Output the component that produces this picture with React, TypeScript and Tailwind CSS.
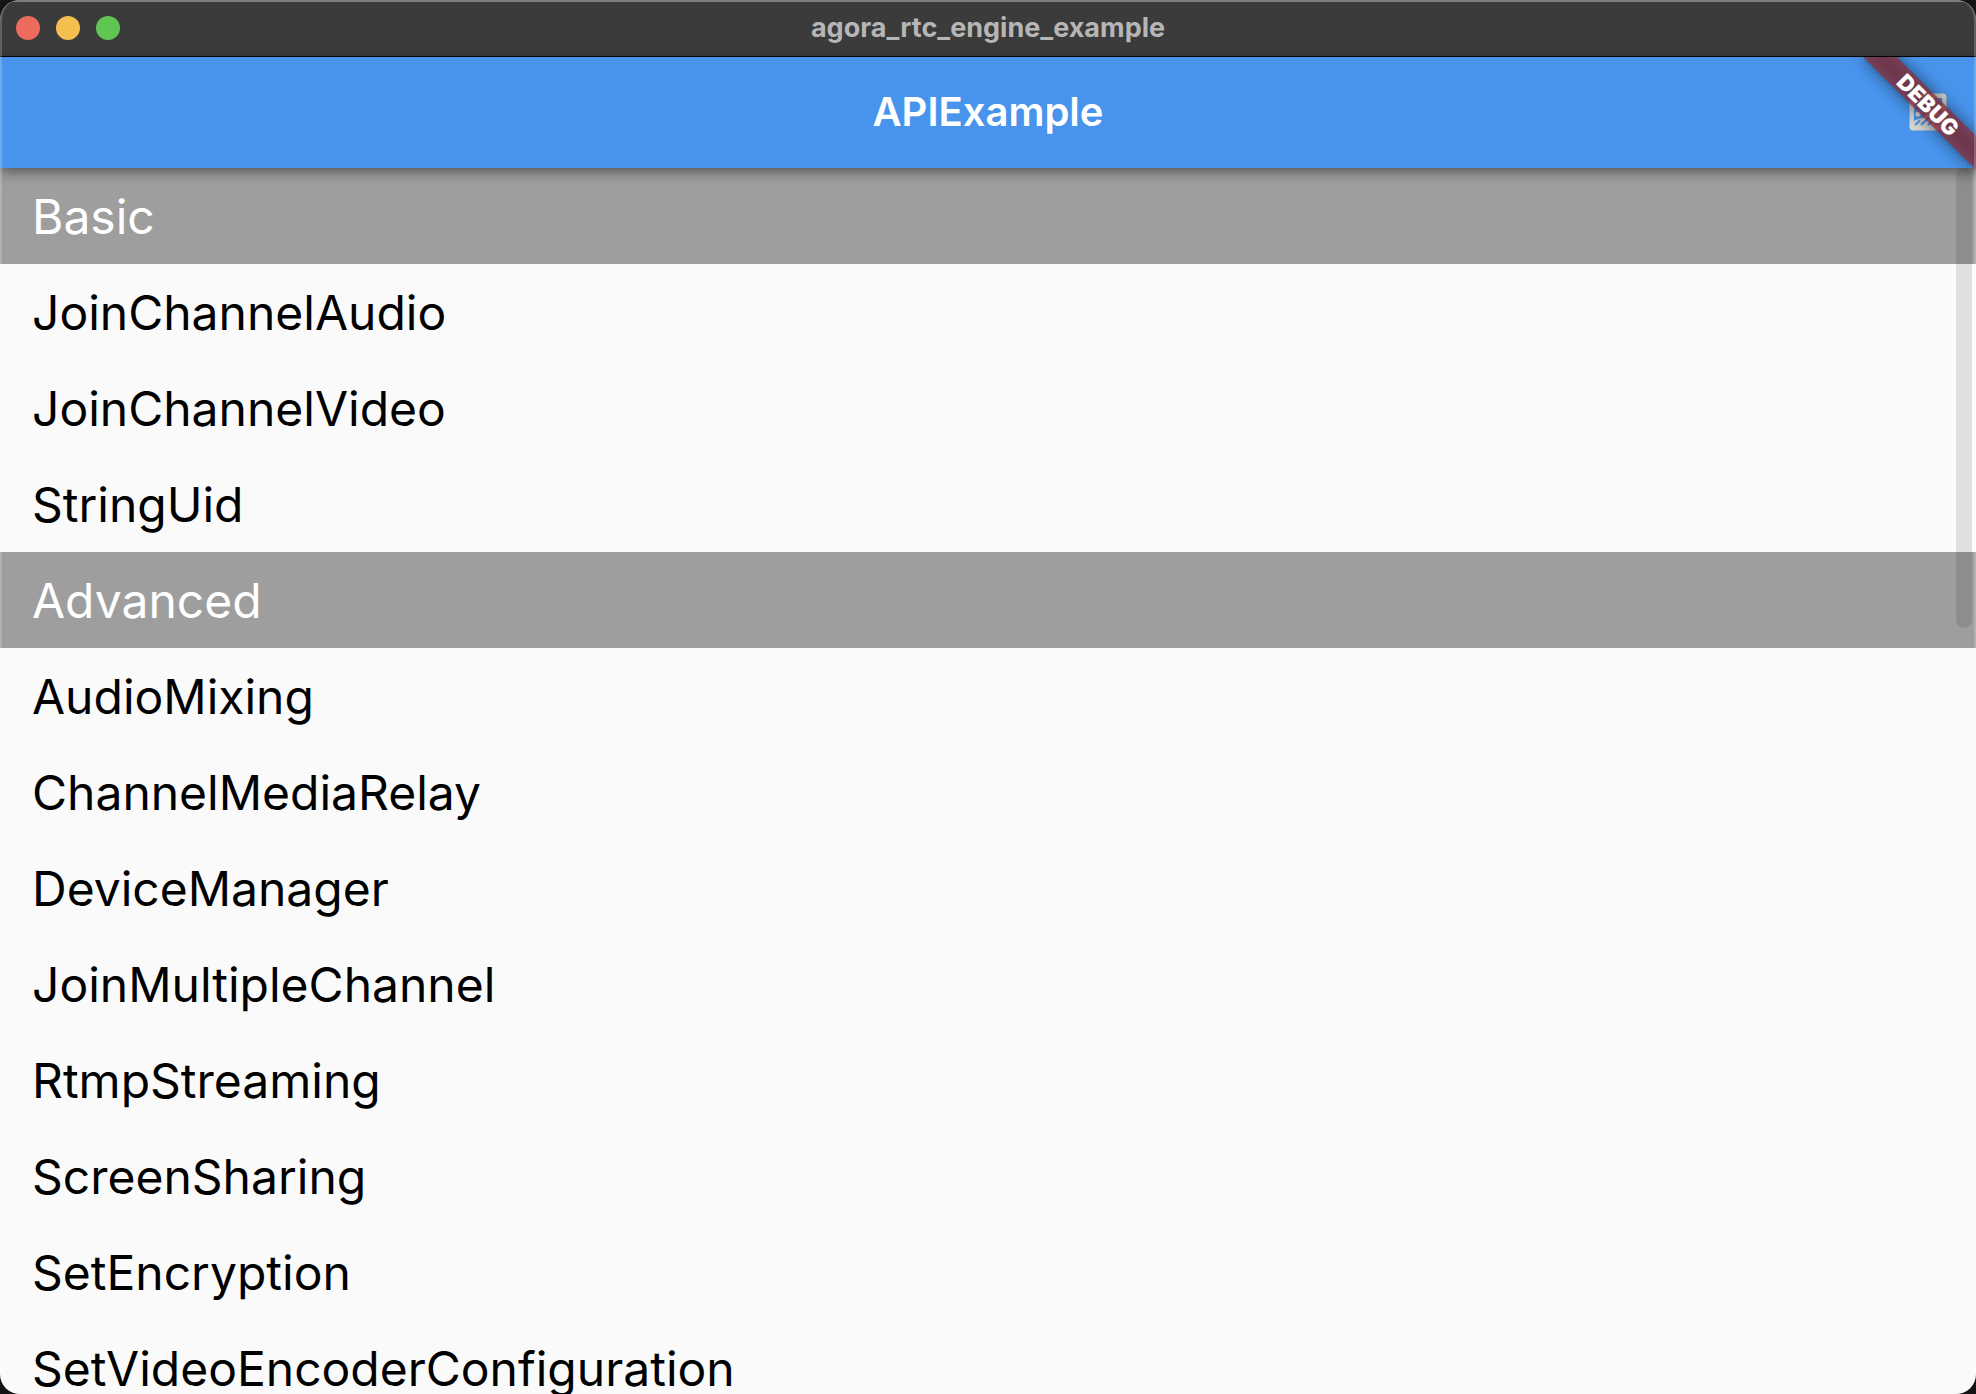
import { useState } from 'react'

interface Section {
  title: string
  items: string[]
}

const SECTIONS: Section[] = [
  { title: 'Basic', items: ['JoinChannelAudio', 'JoinChannelVideo', 'StringUid'] },
  {
    title: 'Advanced',
    items: [
      'AudioMixing', 'ChannelMediaRelay', 'DeviceManager', 'JoinMultipleChannel',
      'RtmpStreaming', 'ScreenSharing', 'SetEncryption', 'SetVideoEncoderConfiguration',
    ],
  },
]

function TitleBar({ title }: { title: string }) {
  return (
    <div className="grid h-[57px] shrink-0 grid-cols-[1fr_auto_1fr] items-center border-t-2 border-b border-t-[#7d7d7d] border-b-black bg-[#3b3b3b] px-4 pb-[2px]">
      <div className="flex gap-4">
        <button aria-label="Close" className="size-6 rounded-full bg-[#ed6a5e]" />
        <button aria-label="Minimize" className="size-6 rounded-full bg-[#f5bf4f]" />
        <button aria-label="Zoom" className="size-6 rounded-full bg-[#61c554]" />
      </div>
      <span className="text-[27px] leading-8 font-bold text-[#b6b6b6]">{title}</span>
    </div>
  )
}

function AboutIcon() {
  return (
    <svg viewBox="0 0 38 38" className="size-[38px]" fill="none">
      <defs>
        <linearGradient id="frame" x1="0" y1="0" x2="1" y2="1">
          <stop offset="0" stopColor="#c4c8cc" />
          <stop offset="0.5" stopColor="#d8d8d4" />
          <stop offset="1" stopColor="#c4c8cc" />
        </linearGradient>
      </defs>
      <rect x="0.5" y="0.5" width="37" height="37" rx="4" fill="url(#frame)" />
      <path d="M5 5H33V33H5Z" fill="#4894ed" />
      <circle cx="9" cy="21" r="2.6" fill="#dcdcdc" />
      <path d="M5 28L9 26L14 25L24 15L33 22V33H5Z" fill="#d4d4d2" />
      <path d="M6 32L11 27.5M12 32L20 24.5M19 32L28 23.5M26 32L33 25.5" stroke="#4894ed" strokeWidth="2" />
    </svg>
  )
}

function DebugBanner() {
  return (
    <div className="pointer-events-none absolute top-0 right-0 size-32 overflow-hidden">
      <div className="absolute top-9 -right-8 h-6 w-40 rotate-45 bg-black/50 blur-[8px]" />
      <div className="absolute top-9 -right-8 flex h-6 w-40 rotate-45 items-center justify-center bg-[#8e2c34]/70 text-[22px] leading-6 font-black text-white">
        DEBUG
      </div>
    </div>
  )
}

export default function App() {
  const [, setSelected] = useState<string | null>(null)

  return (
    <div className="h-screen bg-[#141414] font-['Inter','Liberation_Sans',sans-serif]">
      <div className="relative flex h-full flex-col overflow-hidden rounded-[20px] bg-[#fafafa]">
        <TitleBar title="agora_rtc_engine_example" />
        <div className="relative flex min-h-0 flex-1 flex-col">
          <header className="relative z-10 grid h-[111px] shrink-0 grid-cols-[1fr_auto_1fr] items-center bg-[#4894ed] px-[29px] pb-[2px] shadow-[0_4px_12px_rgba(0,0,0,0.45)]">
            <h1 className="col-start-2 text-[40px] leading-12 font-semibold text-white">APIExample</h1>
            <button aria-label="About" className="justify-self-end">
              <AboutIcon />
            </button>
          </header>
          <main className="relative min-h-0 flex-1 overflow-hidden">
            {SECTIONS.map((section) => (
              <section key={section.title}>
                <h2 className="bg-[#9e9e9e] px-8 pt-[21px] pb-[19px] text-5xl leading-14 text-white">
                  {section.title}
                </h2>
                <ul>
                  {section.items.map((item) => (
                    <li key={item}>
                      <button
                        onClick={() => setSelected(item)}
                        className="block w-full px-8 pt-[21px] pb-[19px] text-left text-5xl leading-14 text-black"
                      >
                        {item}
                      </button>
                    </li>
                  ))}
                </ul>
              </section>
            ))}
            {/* Scroll thumb */}
            <div className="absolute top-0 right-1 h-[460px] w-4 rounded-full bg-black/10" />
          </main>
          <div className="pointer-events-none absolute inset-0 z-20">
            <DebugBanner />
          </div>
        </div>
        {/* Window edge highlight */}
        <div className="pointer-events-none absolute inset-0 z-30 rounded-[20px] border-x-2 border-white/20" />
      </div>
    </div>
  )
}
